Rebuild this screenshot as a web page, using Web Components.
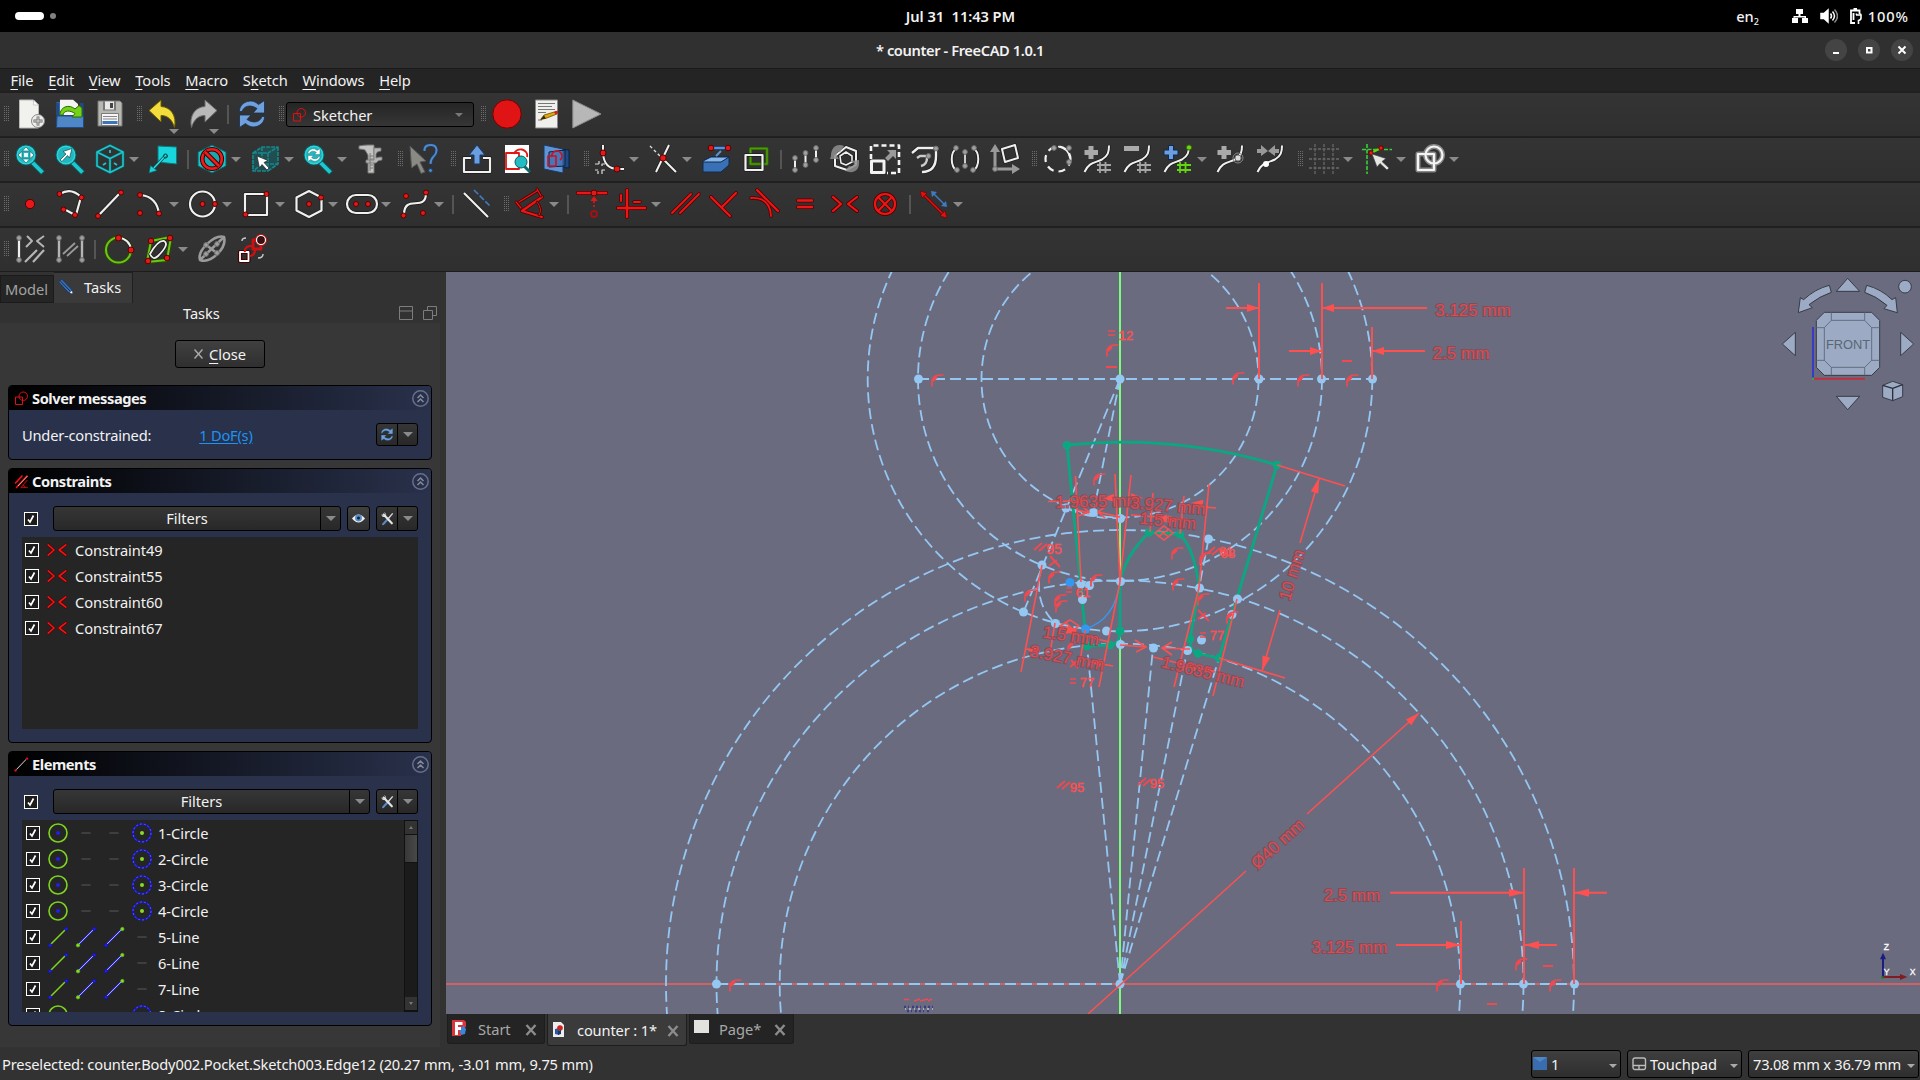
<!DOCTYPE html>
<html lang="en">
<head>
<meta charset="utf-8">
<title>counter - FreeCAD 1.0.1</title>
<style>
html,body{margin:0;height:100%;background:#323232;overflow:hidden}
body{font:14.667px/20px "Noto Sans",sans-serif;letter-spacing:-.06px;color:#f2f2f2;width:1920px;height:1080px}
</style>
</head>
<body>
<fc-app></fc-app>
<script>
const dot = (x, y, c = '#e01a1a', s = '#5a0000', r = 2.5) => `<circle cx="${x}" cy="${y}" r="${r}" fill="${c}" stroke="${s}" stroke-width="1"/>`;
const gd = (x, y) => dot(x, y, '#a0a0a0', '#6a6a6a', 2.4);
const W = (d, w = 2.2, x = '') => `<path d="${d}" fill="none" stroke="#1c1c1c" stroke-width="${w + 1.4}" ${x}/><path d="${d}" fill="none" stroke="#f0f0ee" stroke-width="${w}" ${x}/>`;
const L = (d, c, w = 2, x = '') => `<path d="${d}" fill="none" stroke="${c}" stroke-width="${w}" ${x}/>`;
const RD = (d, w = 1.8) => L(d, '#500000', w + 1.6, 'stroke-linecap="round"') + L(d, '#ef1515', w, 'stroke-linecap="round"');
const lens = `<path d="M17 18L28 29" stroke="#0a5c60" stroke-width="5.400"/><path d="M17 18L27.500 28.500" stroke="#1fc8cf" stroke-width="3.800"/><circle cx="11" cy="11" r="9.800" fill="#25b6bd" stroke="#0b5f63" stroke-width="1.400"/><circle cx="11" cy="11" r="8.800" fill="none" stroke="#2bd6dd" stroke-width="1.400"/>`;
const sync = (a, b) => `<g fill="${a}" stroke="${b}" stroke-width=".8"><path d="M2.500 12.500C2 4 14 -2 21.500 5.500L27.500 1.500V14H16L20 9.500C13 5 7 7 5 12.500Z"/><path d="M27.500 17.500C28 26 16 32 8.500 24.500L2.500 28.500V16H14L10 20.500C17 25 23 23 25 17.500Z"/></g>`;
const hash = c => L('M17 18V29M22.500 18V29M14 21H28M14 26H28', c, 1.8);
const spl = W('M1.500 28C6 18 12 19 19 15.500C25 12 26 8 26 1.500', 2);
const ICONS = {
  newdoc: `<g transform="translate(1.500 0)"><path d="M3 1H17L22 6V29H3Z" fill="#f1f1ee" stroke="#b9b9b4"/><path d="M17 1L22 6H17Z" fill="#fff" stroke="#b0b0b0" stroke-width=".6"/><circle cx="21.500" cy="22" r="6.500" fill="#eee" stroke="#888"/><path d="M21.500 17.500V26.500M17 22H26" stroke="#666" stroke-width="2.800"/><path d="M21.500 18V26M17.500 22H25.500" stroke="#ddd" stroke-width="1"/></g>`,
  open: `<path d="M1.500 3H6V16H1.500Z" fill="#3465a4"/><path d="M5 .8H18L23 5V18H5Z" fill="#f4f4f2"/><path d="M1.500 4V28H28.500V4H25V16H4V4Z" fill="#204a87"/><path d="M2 17H28.500V28.500H1.500Z" fill="#4f86c6" stroke="#204a87"/><path d="M4.500 16C6 7 14 5 20 10L24 6.500 27 9V18H17L20 14.500C15 11 9 11 8 16Z" fill="#73d216" stroke="#2e6b04" stroke-width="1"/>`,
  save: `<path d="M3 2H25L27 4V27H3Z" fill="#b8b8b2" stroke="#777" /><rect x="8" y="2.500" width="13" height="9" fill="#777"/><rect x="10" y="2.500" width="9" height="8" fill="#e8e8e8"/><rect x="15" y="4" width="3" height="5" fill="#444"/><rect x="6.500" y="14.500" width="17" height="12" fill="#f6f6f6" stroke="#666" stroke-width=".8"/><path d="M8 17.500H22M8 20H22" stroke="#888"/><rect x="7.500" y="22" width="15" height="3" fill="#3d74b8"/>`,
  undo: `<path d="M1 11.500L13 1V7.500C23 8 29 17 26.500 28.500C24 20 19 16.500 13 16.500V23Z" fill="#f2dd3c" stroke="#6d5c00"/>`,
  redo: `<path d="M29 11.500L17 1V7.500C7 8 1 17 3.500 28.500C6 20 11 16.500 17 16.500V23Z" fill="#b9b9b9" stroke="#6b6b6b"/>`,
  refresh: sync('#6fa0dc', '#15304f'),
  record: `<circle cx="15" cy="15" r="14.200" fill="#e01414" stroke="#7a0000"/>`,
  note: `<rect x="3.500" y="1" width="22" height="28" fill="#efefeb" stroke="#888"/><path d="M6 4.500H23M6 7.500H20M6 10.500H23M6 13.500H14M6 21H10" stroke="#777" stroke-width="1"/><path d="M9 20L12 16 24 12.500 25 15 13.500 19.500Z" fill="#e0a80c" stroke="#6b4a00" stroke-width=".8"/><path d="M8 21L12 16.500 14 19.500Z" fill="#3a2800"/><path d="M22 13L25.500 11.500 26.500 14 23.500 15.500Z" fill="#c22"/>`,
  play: `<path d="M.8 1L29 15 .8 29Z" fill="#b7b7b7" stroke="#8a8a8a"/>`,
  fitall: lens + `<path d="M11 3L14.500 7H7.500ZM11 19L7.500 15H14.500ZM3 11L7 7.500V14.500ZM19 11L15 14.500V7.500Z" fill="#fff" stroke="#0a5c60" stroke-width=".6"/><rect x="9" y="9" width="4" height="4" fill="#e9ffff"/>`,
  fitsel: lens + `<path d="M5 16L11 10 8 7.500 17 4.500 14.500 14 12.500 11.500 7 17.500Z" fill="#fff" stroke="#0a4c50" stroke-width=".7"/>`,
  cube: L('M15 1.500L28 8V22L15 28.500 2 22V8ZM2 8L15 14.500 28 8M15 14.500V28', '#0a5c60', 3) + L('M15 1.500L28 8V22L15 28.500 2 22V8ZM2 8L15 14.500 28 8M15 14.500V28', '#20c4ca', 1.6) + L('M8 21L11 19M19 19L22 21M15 6V9', '#20c4ca', 1.8),
  plane: `<path d="M10 2L28.500 3V20L10 18Z" fill="#19d6dd" stroke="#087b80"/>` + L('M18 11L4 26', '#064f52', 3) + L('M18 11L4 26', '#2fe0e6', 1.4) + `<path d="M1 29L2.500 21.500 9 26.500Z" fill="#20d0d6" stroke="#066" stroke-width=".7"/><circle cx="17.500" cy="12" r="2" fill="none" stroke="#044" />`,
  style: `<path d="M15 1L29 8V22L15 29 1 22V8Z" fill="#19c4ca" stroke="#0a5c60"/><circle cx="15" cy="15" r="9.800" fill="#168086" fill-opacity=".4" stroke="#3a0000" stroke-width="4.600"/><circle cx="15" cy="15" r="9.800" fill="none" stroke="#ee1c1c" stroke-width="2.600"/><path d="M8 8L22 22" stroke="#3a0000" stroke-width="4.600"/><path d="M8 8L22 22" stroke="#ee1c1c" stroke-width="2.600"/>`,
  boxsel: `<path d="M2 9L12 3H28V20L18 27H2Z" fill="#106a6e" fill-opacity=".5"/>` + L('M3 9H18V27H3ZM3 9L12 3H28L18 9M28 3V20L18 27M12 3V20H28M12 20L3 27', '#17878b', 1.6, 'stroke-dasharray="4 1"') + `<path d="M7 12L18 16.500 14 18.500 19 24 17 26 12 20.500 9.500 24Z" fill="#fff" stroke="#222" stroke-width=".7"/>`,
  syncview: lens + `<g transform="translate(3.800 3.800) scale(.48)">${sync('#fff', '#0b5f63')}</g>`,
  caliper: `<path d="M3 2Q8 1 12 1H18V29H12V11L9 6Q6 5 3 5Z" fill="#c3c3c1" stroke="#777"/><path d="M18 4Q22 4 25 4V7Q21 7 20 10V14Q22 13 26 13V16Q22 16 20 19H10V16H18Z" fill="#b4b4b2" stroke="#777" stroke-width=".8"/><path d="M14 9V27M17 12H14M17 15H14M17 21H14M17 24H14" stroke="#777" stroke-width="1"/>`,
  whats: `<path d="M1 2L17 17 11 18 16 28 12 29.500 8 20 2.500 24Z" fill="#8a8a84" stroke="#555"/>` + L('M15.500 7C15 1 20 1 22 1C27 1 28.500 5 27 9C25.500 13 21.500 13 21.500 20', '#1b3d68', 3.600) + L('M15.500 7C15 1 20 1 22 1C27 1 28.500 5 27 9C25.500 13 21.500 13 21.500 20', '#5488c8', 2) + `<circle cx="21.500" cy="26.500" r="2" fill="#5488c8" stroke="#1b3d68"/>`,
  leave: W('M9 14H2V28H28V14H21', 2.2) + `<path d="M15 1L23 11H18V20H12V11H7Z" fill="#6a9ee0" stroke="#173a66"/>`,
  viewsk: `<rect x="3" y="1" width="24" height="28" fill="#fff"/>` + L('M4 9H17V25H4ZM12 10A6.500 6 0 1 1 25 13', '#e01818', 1.8) + `<path d="M22 22L28 28" stroke="#0b6a6e" stroke-width="3"/><circle cx="19" cy="18" r="6" fill="#23bcc3" stroke="#0b5f63"/>`,
  section: `<path d="M14 5L27 6V24L14 23Z" fill="#204a87" stroke="#0b2240"/><path d="M2 1L21 5V29L2 25Z" fill="#5f95d6" stroke="#173a66"/><path d="M7 8L23 6V22L7 23Z" fill="#3566a5" fill-opacity=".6" stroke="#0b2240"/>` + L('M6 12H14V22H6ZM10 13A5 5 0 1 1 18 16', '#d01020', 1.6),
  fillet: W('M8 1V9M8 9Q9 25 23 25H29', 2) + L('M4 20V17M4 20H0M10 26H7V30M7 22V20H10M3 26H0M3 27V30', '#ddd', 1.2) + dot(8, 9, '#e01a1a', '#5a0000', 3) + dot(22, 25, '#e01a1a', '#5a0000', 3),
  trim: W('M21 1L8 28M15 15L28 28', 2) + L('M2 2L12 12', '#ddd', 1.4, 'stroke-dasharray="3 2.500"') + dot(15, 14, '#e01a1a', '#5a0000', 3.2),
  external: `<path d="M2 17L10 13H28V21L20 28H2Z" fill="#3a70b5" stroke="#0f2a4c"/><path d="M2 17L10 13H28L20 18H2Z" fill="#86b5ec" stroke="#0f2a4c"/>` + L('M11 4H26', '#204a87', 3.6) + L('M11 4H26M15 12L20 7', '#5b92d6', 2) + dot(10, 4, '#e01a1a', '#5a0000', 2.8) + dot(27, 4, '#e01a1a', '#5a0000', 2.8),
  carbon: L('M9.500 4.500H26V20H9.500Z', '#2d6b02', 3) + L('M9.500 4.500H26V20H9.500Z', '#4e9a06', 1.6) + W('M4.500 11H21.500V26H4.500Z', 2.2),
  pts: L('M5 15V26M15.500 9V21M26 3V16', '#eee', 2) + gd(5, 14) + gd(5, 26) + gd(15.500, 9) + gd(15.500, 21) + gd(26, 4) + gd(26, 16),
  rotate: W('M5 12L16 3 26 7V21L17 26 5 22Z', 2) + W('M10 12L16 8 22 12V18L16 21 11 19Z', 1.6) + `<path d="M1 12C1 4 6 -1 14 2L10 8C7 7 6 10 7 12L9 15H0ZM29 19C29 27 23 30 15 27L19 22C23 23 24 21 24 19L20 17 29 16Z" fill="#8f8f8f" fill-opacity=".85"/>`,
  scale: L('M1 15V1.500H29V29H17', '#f4f4f4', 2.6, 'stroke-dasharray="5 3"') + L('M1.500 17H14V28.500H1.500Z', '#f4f4f4', 3) + `<path d="M15 14L20 9 17 6H26V15L23 12 18 17Z" fill="#999"/>`,
  offset: W('M2 9L8 4H26V12C26 22 22 28 12 28', 2.4) + L('M7 14L10 12H17V14C17 19 15 21 11 22', '#ccc', 2.400) + gd(26, 4.500) + gd(18.500, 12),
  symm: W('M7 4C0 8 0 22 7 27M23 4C30 8 30 22 23 27', 2) + L('M15 8V24', '#ccc', 2) + gd(6, 4) + gd(7, 26) + gd(15, 8) + gd(15, 22) + gd(24, 4) + gd(23, 26),
  axes: L('M5 25V6M5 25H24', '#999', 3) + `<path d="M5 0L10 8H0ZM30 25L22 20V30Z" fill="#999"/>` + W('M12 5L25 1 28 14 15 18Z', 2) + gd(5, 25),
  bconv: `<circle cx="15" cy="15" r="12.500" fill="none" stroke="#f2f2f2" stroke-width="2.200" stroke-dasharray="7 5"/>` + gd(11, 4) + gd(26, 4) + gd(26, 18) + L('M15 2.500Q25 4 27 14', '#f2f2f2', 1.6),
  binc: spl + hash('#a5a5a5') + L('M8 2V15M1.500 8.500H15', '#aaa', 5),
  bdec: spl + hash('#a5a5a5') + L('M1 4.500H16', '#aaa', 5),
  bknot: spl + hash('#62d60e') + L('M8 1V16M.500 8.500H15.500', '#0f2a4c', 6) + L('M8 2V15M1.500 8.500H14.500', '#6a9ee0', 4) + dot(26, 3.500, '#73d216', '#2b6a02', 2.6),
  bins: spl + L('M8 2V15M1.500 8.500H15', '#aaa', 5) + `<circle cx="22" cy="14" r="5" fill="none" stroke="#888"/><circle cx="22" cy="14" r="3" fill="#ddd" stroke="#777"/>`,
  bjoin: spl + `<path d="M1 5H5V1L12 7 5 12V9H1ZM23 5H19V1L12 7 19 12V9H23Z" fill="#999"/><circle cx="10" cy="20" r="3" fill="#fff"/>`,
  grid: L('M6 0V30M15 0V30M24 0V30M0 5H30M0 15H30M0 24H30', '#696969', 1.300, 'stroke-dasharray="3 1.500"'),
  snap: L('M5 0V30M0 5.500H30', '#38d038', 1.6, 'stroke-dasharray="4 1.500"') + L('M9 9L19 4', '#62d60e', 2) + dot(9, 9, '#f01818', '#5a0000', 2.2) + dot(19, 4, '#f01818', '#5a0000', 2.2) + `<path d="M10 10L24 14.500 20 17.500 27 24 25 26 18 19.500 15 23Z" fill="#e6e6e2" stroke="#444" stroke-width=".7"/>`,
  render: L('M3 10H19V26H3Z', '#888', 5) + `<circle cx="19" cy="11" r="8.500" fill="none" stroke="#888" stroke-width="5"/><circle cx="19" cy="11" r="8.500" fill="none" stroke="#f4f4f4" stroke-width="2.200"/>` + L('M3 10H19V26H3Z', '#f4f4f4', 2.2),
  point: dot(15, 15, '#e81818', '#5a0000', 4.600),
  poly: W('M5 5Q16 -2 26 8L21 26M20 26L9 20', 2.2) + dot(4.500, 5) + dot(26.500, 8.500) + dot(8.500, 20.500) + dot(20, 26),
  line: W('M3 27L25 4', 2.2) + dot(3, 27) + dot(26, 3.500),
  eline: W('M3 27L25 4', 1.6) + dot(3, 27) + dot(26, 3.500),
  arc: W('M6 6Q22 8 24 25', 2.2) + dot(5, 6) + dot(24, 24.500) + dot(5, 24),
  circle: `<circle cx="14.500" cy="15" r="12.500" fill="none" stroke="#1c1c1c" stroke-width="3.600"/><circle cx="14.500" cy="15" r="12.500" fill="none" stroke="#f0f0ee" stroke-width="2.200"/>` + dot(14.500, 15) + dot(27, 15),
  rect: W('M4 5H26V26H4Z', 2.2) + dot(25.500, 5) + dot(4.500, 25.500),
  hex: W('M15 2L27.500 8.500V21.500L15 28 2.500 21.500V8.500Z', 2.200) + dot(15, 15) + dot(27, 8.500),
  slot: W('M9 6H21A9 9 0 0 1 21 24H9A9 9 0 0 1 9 6Z', 2.2) + dot(9, 15) + dot(21, 15),
  bspline: W('M4 26C4 4 26 24 26 4', 2.2) + dot(26, 3.500) + dot(3.500, 26.500) + dot(6, 7) + dot(23, 24),
  constr: W('M2 4L26 28', 2.2) + L('M12 1L29 18', '#3f7bc4', 1.6, 'stroke-dasharray="6 2"'),
  dim: RD('M27 8L7 22L27 28', 2.2) + RD('M22 13Q28 20 24 26', 1) + RD('M4 13L22 2M1 13L6 19M22 0L26 7', 1.2),
  coin: RD('M1 4H29', 2.6) + dot(17, 4, '#e01a1a', '#5a0000', 3) + L('M17 12V20', '#e01818', 1.6, 'stroke-dasharray="2 2"') + `<path d="M17 7L20.500 12H13.500Z" fill="#e01818"/><circle cx="17" cy="25" r="3" fill="none" stroke="#a51015" stroke-width="1.800"/>`,
  hv: RD('M10 1V28M1 19H28', 2.400) + RD('M4 6V12M17 13H23', 2),
  par: RD('M2 24L21 5M10 24L29 5', 1.800),
  perp: RD('M1 8L20 27M12 18L26 4', 2.2),
  tang: RD('M7 1L28 22', 2.2) + RD('M1 9Q20 8 21 27', 1.8),
  equal: RD('M8 11.500H22M8 18H22', 2.4),
  sym: RD('M3 8L11 15 3 22M27 8L18 15 27 22', 2.2),
  block: `<circle cx="15" cy="15" r="10" fill="none" stroke="#500000" stroke-width="3.800"/>` + RD('M8 8L22 22M22 8L8 22', 2) + `<circle cx="15" cy="15" r="10" fill="none" stroke="#ef1515" stroke-width="2.200"/>`,
  toggle: L('M3 4L26 27', '#600', 3) + L('M3 4L26 27', '#e41010', 1.6) + `<path d="M1 2L8 4 3 9ZM28 29L21 27 26 22Z" fill="#e41010" stroke="#600" stroke-width=".6"/>` + L('M14 4L26 16', '#3f7bc4', 1.5) + `<path d="M12 2L18 3 13 8ZM28 18L22 17 27 12Z" fill="#3f7bc4"/>`,
  selc: W('M4 6V24', 2.4) + gd(4, 4) + gd(4, 26) + L('M12 2L17 7 11 13M29 2L22 7 29 13', '#b5b5b5', 2) + L('M10 28L22 16M18 28L29 16', '#b5b5b5', 2.2),
  sele: L('M4 5V25M27 5V25', '#b5b5b5', 2.4) + gd(4, 4) + gd(4, 26) + gd(27, 4) + gd(27, 26) + L('M8 20L20 9M12 22L23 12', '#999', 1.800),
  ell: `<circle cx="14.500" cy="16" r="12.500" fill="none" stroke="#274d00" stroke-width="4"/><circle cx="14.500" cy="16" r="12.500" fill="none" stroke="#6fc41c" stroke-width="2"/>` + W('M14 3.500Q26 5 27 16', 2) + dot(14.500, 4, '#e01a1a', '#5a0000', 3) + dot(27, 16, '#e01a1a', '#5a0000', 3),
  bpoly: L('M7 7L27 3 23 26 3 28Z', '#274d00', 4) + L('M7 7L27 3 23 26 3 28Z', '#6fc41c', 2) + W('M6 20Q14 6 20 7Q26 10 14 22Q9 27 6 20Z', 1.8) + dot(7, 7, '#e01a1a', '#5a0000', 2.8) + dot(26, 4, '#e01a1a', '#5a0000', 2.8) + dot(4, 27, '#e01a1a', '#5a0000', 2.8) + dot(23, 24, '#e01a1a', '#5a0000', 2.8),
  ellax: L('M3 26C0 16 18 0 27 3C30 14 14 30 3 26ZM27 3L3 26M8 10L21 20', '#9b9b9b', 2.600) + gd(20, 10) + gd(9, 20) + gd(9, 11) + gd(20, 19),
  virt: L('M3 18H11.500V27H3Z', '#400', 4.200) + L('M3 18H11.500V27H3Z', '#fff', 1.8) + L('M8 18A5 5 0 1 1 13 22', '#d01010', 2.2) + L('M19 6H16V15H24V11', '#d01010', 2.800) + `<circle cx="24" cy="6" r="4.600" fill="#3a1010" stroke="#fff" stroke-width="1.400"/><circle cx="24" cy="6" r="5.600" fill="none" stroke="#d01010"/>` + L('M5 7Q5 4 9 4M26 20Q26 24 21 24', '#ccc', 1.400),
  sketcher: L('M3 12H17V27H3Z', '#e01010', 2) + `<circle cx="18.500" cy="10.500" r="8.500" fill="none" stroke="#e01010" stroke-width="2"/>`,
  cons: RD('M3 18L16 4M5 27L26 4', 2.6) + L('M8 24L27 4', '#ddd', 1.4) + RD('M27 27H14L26 13M18 22Q22 24 22 27', 1),
  pencil: `<path d="M-1 4L6 -2 27 20 29 29 20 27Z" fill="#3a6db2" stroke="#122b4d" stroke-width="1.500"/><path d="M23 28L29 29 28 23Z" fill="#fff"/><path d="M2 1L24 24" stroke="#122b4d" stroke-width="2"/>`,
  eye: `<path d="M0 15Q15 -3 30 15Q15 33 0 15Z" fill="#eee"/><circle cx="15" cy="14" r="8" fill="#5a8cc8"/><circle cx="15" cy="14" r="3.500" fill="#0c2340"/>`,
  tools: `<path d="M5 28L17 15" stroke="#5a8cc8" stroke-width="5" stroke-linecap="round"/><path d="M17 15L27 3" stroke="#ddd" stroke-width="3"/><path d="M6 6L25 26" stroke="#e4e4e4" stroke-width="5" stroke-linecap="round"/><path d="M1 5L6 10 11 5 7 1C12 1 13 7 11 11C7 13 1 11 1 5Z" fill="#e4e4e4"/>`,
  ec: `<circle cx="15" cy="15" r="13.500" fill="none" stroke="#7ed321" stroke-width="2.400"/><circle cx="15" cy="15" r="3" fill="#2020e8"/>`,
  ecb: `<circle cx="15" cy="15" r="13.500" fill="none" stroke="#1414c8" stroke-width="2.800"/><circle cx="15" cy="15" r="13.500" fill="none" stroke="#7070ff" stroke-width="1.200" stroke-dasharray="3 3"/><circle cx="15" cy="15" r="3" fill="#84e020"/>`,
  none: `<path d="M8 15H22" stroke="#565656" stroke-width="1.600"/>`,
  l1: L('M3 27L27 3', '#7ed321', 2.4) + dot(3, 27.500, '#2020e8', '#10109a', 2.6) + dot(27.500, 3, '#2020e8', '#10109a', 2.6),
  l2: L('M3 27L27 3', '#2a2ae0', 2.8) + L('M3 27L27 3', '#d0d0d8', 1.2) + dot(3, 27.500, '#84e020', '#5fae15', 2.6) + dot(27.500, 3, '#2020e8', '#10109a', 2.6),
  l3: L('M3 27L27 3', '#2a2ae0', 2.8) + L('M3 27L27 3', '#d0d0d8', 1.2) + dot(3, 27.500, '#2020e8', '#10109a', 2.6) + dot(27.500, 3, '#84e020', '#5fae15', 2.6)
};

function define(name, css, html) {
  customElements.define(name, class extends HTMLElement {
    connectedCallback() {
      if (this.shadowRoot) return;
      const root = this.attachShadow({ mode: 'open' });
      root.innerHTML = `<style>*{box-sizing:border-box}${css}</style>` + (typeof html === 'function' ? html(this) : html);
    }
  });
}

define('fc-icon', ':host{display:block;flex:none;width:30px;height:30px}svg{display:block;width:100%;height:100%;overflow:visible}',
  el => `<svg viewBox="0 0 30 30" stroke-linejoin="round">${ICONS[el.getAttribute('name')]}</svg>`);

define('fc-tool', `:host{display:flex;align-items:center;width:40px;height:42px;padding-left:5px;flex:none}
  :host([menu]){width:53px} i{width:0;height:0;border:5px solid transparent;border-top-color:#8a8a8a;border-bottom:0;margin-left:4px}
  :host([drop]){position:relative} :host([drop]) i{position:absolute;left:26px;top:36px;margin:0}`,
  el => `<fc-icon name="${el.getAttribute('icon')}"></fc-icon>${el.hasAttribute('menu') || el.hasAttribute('drop') ? '<i></i>' : ''}`);

define('fc-grip', `:host{display:flex;justify-content:flex-end;align-items:center;width:13px;height:42px;padding-right:1px;flex:none}
  :host([first]){width:10px}:host([wide]){width:14px;padding-right:2px} b{width:5px;height:16px;background:repeating-linear-gradient(90deg,transparent 0 1px,#323232 1px 2px),repeating-linear-gradient(#6b6b6b 0 1px,#323232 1px 2px)}`, '<b></b>');

define('fc-sep', ':host{display:flex;align-items:center;justify-content:center;width:9px;height:42px;flex:none}b{width:2px;height:19px;background:#555}', '<b></b>');

define('fc-toolbar', ':host{display:flex;height:45px;border-top:2px solid #202020;background:linear-gradient(#343434,#2f2f2f);align-items:flex-start}', '<slot></slot>');

define('fc-combo', `:host{display:flex;align-items:center;width:188px;height:25px;margin-top:9px;border:1px solid #000;border-radius:3px;background:linear-gradient(#252525,#363636);padding:0 10px 0 5px}
  fc-icon{width:15px;height:18px;margin-right:6px} i{margin-left:auto;border:4px solid transparent;border-top-color:#777;border-bottom:0}`,
  '<fc-icon name="sketcher"></fc-icon><slot></slot><i></i>');

define('fc-topbar', `:host{display:grid;grid-template-columns:1fr auto 1fr;align-items:center;height:32px;background:#000;font-weight:600;font-size:14.667px}
  .l{display:flex;align-items:center;gap:6px;padding-left:15px}.l b{width:29px;height:8px;border-radius:4px;background:#fff}.l i{width:6px;height:6px;border-radius:3px;background:#808080}
  .r{display:flex;justify-content:flex-end;align-items:center;padding-right:12px} .r span{font-weight:500} sub{font-size:9px;line-height:0;vertical-align:-3px} svg{display:block}`,
  `<div class="l"><b></b><i></i></div><div style="white-space:pre;padding-left:1px">Jul 31  11:43 PM</div>
  <div class="r"><span style="margin-right:32px">en<sub>2</sub></span>
  <svg width="18" height="18" viewBox="0 0 18 18" style="margin-right:11px" fill="#fff"><path d="M5 2h7v5h-2.500v2H15v2h2v5h-6v-5h2.500v-.5h-10V11H7v5H1v-5h1.500V9H7.500V7H5z"/></svg>
  <svg width="18" height="18" viewBox="0 0 18 18" style="margin-right:11px" fill="none" stroke="#fff" stroke-width="1.500"><path d="M1 6.500h3L8 3v12L4 11.500H1z" fill="#fff" /><path d="M10.500 6.500q2 2.500 0 5M12.500 4.500q4 4.500 0 9"/><path d="M14.500 2.500q6 6.500 0 13" stroke="#888"/></svg>
  <svg width="15" height="18" viewBox="0 0 15 18" fill="none" stroke="#fff" stroke-width="1.800"><path d="M6 16H2V3.500h8.500V7M4.500 2h3.500"/><path d="M7 8h5v3q0 2-2.500 2.500V17M7.500 6.500V8M11.500 6.500V8" stroke-width="1.600"/><path d="M4.500 6v7" /></svg>
  <span style="margin-left:4px;letter-spacing:.9px;margin-right:-1px">100%</span></div>`);

define('fc-titlebar', `:host{display:grid;grid-template-columns:1fr auto 1fr;align-items:center;height:36px;background:#303030;font-weight:600;padding-bottom:1px;letter-spacing:-.4px;box-sizing:border-box}
  .w{display:flex;justify-content:flex-end;gap:11px;padding-right:7px}.w b{width:22px;height:22px;border-radius:11px;background:#444;display:grid;place-items:center}svg{width:12px;height:12px;fill:none;stroke:#fff;stroke-width:2}`,
  `<span></span><span>* counter - FreeCAD 1.0.1</span><div class="w"><b><svg><path d="M3 9H9"/></svg></b><b><svg><rect x="4" y="4" width="4.500" height="4.500"/></svg></b><b><svg><path d="M2.500 2.500L9.500 9.500M9.500 2.500L2.500 9.500"/></svg></b></div>`);

define('fc-menubar', `:host{display:flex;box-sizing:border-box;height:23px;align-items:center;background:#242424;border-top:1px solid #1a1a1a;padding:0 0 0 3px;letter-spacing:-.1px}
  span{padding:0 7.400px}u{text-underline-offset:3px;text-decoration-thickness:1px}`,
  '<span><u>F</u>ile</span><span><u>E</u>dit</span><span><u>V</u>iew</span><span><u>T</u>ools</span><span><u>M</u>acro</span><span>S<u>k</u>etch</span><span><u>W</u>indows</span><span><u>H</u>elp</span>');

define('fc-check', ':host{display:block;width:14px;height:14px;flex:none}svg{display:block}',
  '<svg width="14" height="14" fill="none" stroke="#fff"><rect x=".5" y=".5" width="13" height="13" fill="#1c1c1c"/><path d="M4 7.500L6 10 9.500 3.500" stroke-width="1.700"/></svg>');

define('fc-split', `:host{display:flex;height:25px;border:1px solid #000;border-radius:3px;background:linear-gradient(#363636,#282828);align-items:stretch}
  div{flex:1;display:flex;align-items:center;justify-content:center;padding-bottom:1px}b{width:20px;border-left:1px solid #000;display:grid;place-items:center}i{border:5px solid transparent;border-top-color:#8a8a8a;border-bottom:0}`,
  '<div><slot></slot></div><b><i></i></b>');
define('fc-push', ':host{display:flex;align-items:center;justify-content:center;border:1px solid #000;border-radius:3px;background:linear-gradient(#404040,#2f2f2f)}', '<slot></slot>');

define('fc-group', `:host{display:flex;flex-direction:column;border:1px solid #000;border-radius:4px;background:#29314b;overflow:hidden;flex:none}
  header{height:24px;display:flex;align-items:center;padding:0 2px 0 5px;background:linear-gradient(90deg,#000,#29314b);font-weight:700;letter-spacing:-.45px}
  header fc-icon{width:15px;height:15px;margin-right:3px}svg{margin-left:auto}`,
  el => `<header><fc-icon name="${el.getAttribute('icon')}"></fc-icon>${el.getAttribute('label')}<svg width="17" height="17" fill="none" stroke="#66708a" stroke-width="1.500"><circle cx="8.500" cy="8.500" r="7.700"/><path d="M5.500 8L8.500 5 11.500 8M5.500 12L8.500 9 11.500 12" stroke="#858b9c"/></svg></header><slot></slot>`);

define('fc-crow', ':host{display:flex;align-items:center;height:26px;padding-left:3px}fc-icon{width:22px;height:22px;margin:0 7px 0 7px}',
  '<fc-check></fc-check><fc-icon name="sym"></fc-icon><slot></slot>');
define('fc-erow', ':host{display:flex;align-items:center;height:26px;padding-left:4px;flex:none}.i{display:flex;gap:8px;margin:0 6px 0 8px}fc-icon{width:20px;height:20px}',
  el => `<fc-check></fc-check><div class="i">${(el.hasAttribute('line') ? ['l1', 'l2', 'l3', 'none'] : ['ec', 'none', 'none', 'ecb']).map(n => `<fc-icon name="${n}"></fc-icon>`).join('')}</div><slot></slot>`);

define('fc-tasks', `:host{display:flex;flex-direction:column;width:440px;height:775px;background:#373737}
  .tabs{display:flex;align-items:flex-end;height:31px;background:#323232}
  .t1{width:54px;height:28px;background:#252525;border:1px solid #1b1b1b;color:#a2a2a2;padding:3px 0 0 4px}
  .t2{width:79px;height:31px;background:#3a3a3a;border:1px solid #1f1f1f;border-bottom:0;border-left:0;display:flex;align-items:center;gap:11px;padding:0 0 3px 5px;letter-spacing:.05px}
  .t2 fc-icon{width:14px;height:14px}
  .title{display:flex;align-items:center;height:20px;background:#323232;padding:0 3px 0 183px}.title svg{margin-left:auto}
  .body{display:flex;flex-direction:column;padding:17px 8px 0;}
  fc-push.c{width:90px;height:28px;align-self:center;margin:0 0 17px;gap:6px}
  u{text-underline-offset:3px;text-decoration-thickness:1px}
  .solver{display:flex;align-items:center;height:49px;padding:0 13px;letter-spacing:-.22px}.link{color:#1a94f5;text-decoration:underline;text-underline-offset:2px;margin-left:48px}
  .solver fc-split{width:42px;height:23px;margin-left:auto}.solver fc-icon{width:14px;height:15px}
  .f{display:flex;align-items:center;padding:13px 13px 6px 15px}
  .f fc-check{margin-right:15px}.f .m{flex:1}.f fc-push{width:23px;height:25px;margin-left:6px}.f .s{width:42px;margin-left:6px}
  .f fc-icon{width:13px;height:13px}
  .list{height:192px;margin:0 13px 13px;background:#252525;overflow:hidden}
  .e{display:flex}.e .rows{flex:1;display:flex;flex-direction:column;overflow:hidden;height:192px}
  .sb{width:14px;height:192px;background:#1b1b1b;border:1px solid #111;display:flex;flex-direction:column}.sb b{height:14px;background:#333;display:grid;place-items:center;border-bottom:1px solid #111}.sb .th{height:28px;background:linear-gradient(90deg,#383838,#484848)}.sb i{border:2.500px solid transparent;border-bottom:3px solid #777;border-top:0}.sb .dn{margin-top:auto}.sb .dn i{border-bottom:0;border-top:3px solid #777}`,
  `<div class="tabs"><div class="t1">Model</div><div class="t2"><fc-icon name="pencil"></fc-icon>Tasks</div></div>
  <div class="title">Tasks<svg width="38" height="14" fill="none" stroke="#7d7d7d"><path d="M.5.5H13.500V13.500H.5ZM.5 5H13.500M24.500 4.500H33.500V13.500H24.500ZM28.500 4.500V.5H37.500V9.500H33.500"/></svg></div>
  <div class="body"><fc-push class="c"><svg width="9" height="10" stroke="#aaa" stroke-width="1.500"><path d="M.5.5L8.500 9.500M8.500.5L.5 9.500"/></svg><span><u>C</u>lose</span></fc-push>
  <fc-group icon="sketcher" label="Solver messages"><div class="solver"><span>Under-constrained:</span><span class="link">1 DoF(s)</span><fc-split><fc-icon name="refresh"></fc-icon></fc-split></div></fc-group>
  <fc-group icon="cons" label="Constraints" style="margin-top:8px"><div class="f"><fc-check></fc-check><fc-split class="m">Filters</fc-split><fc-push><fc-icon name="eye"></fc-icon></fc-push><fc-split class="s"><fc-icon name="tools"></fc-icon></fc-split></div>
  <div class="list"><fc-crow>Constraint49</fc-crow><fc-crow>Constraint55</fc-crow><fc-crow>Constraint60</fc-crow><fc-crow>Constraint67</fc-crow></div></fc-group>
  <fc-group icon="eline" label="Elements" style="margin-top:8px"><div class="f"><fc-check></fc-check><fc-split class="m">Filters</fc-split><fc-split class="s"><fc-icon name="tools"></fc-icon></fc-split></div>
  <div class="list e"><div class="rows"><fc-erow>1-Circle</fc-erow><fc-erow>2-Circle</fc-erow><fc-erow>3-Circle</fc-erow><fc-erow>4-Circle</fc-erow><fc-erow line>5-Line</fc-erow><fc-erow line>6-Line</fc-erow><fc-erow line>7-Line</fc-erow><fc-erow>8-Circle</fc-erow></div><div class="sb"><b><i></i></b><b class="th"></b><b class="dn"><i></i></b></div></div></fc-group></div>`);

/* Sketch geometry, in window pixels */
const line = (x1, y1, x2, y2) => `M${x1} ${y1}L${x2} ${y2}`;
const P = [[918.5,379],[1120,379],[1259,379],[1321.5,379],[1372.5,379],[716.5,984],[1120,984],[1460.500,984],[1523.500,984],[1574.500,984],[1066,508],[1093.5,512.500],[1120.500,518.500],[1208.500,539],[1042,565],[1081,584],[1089.500,585.500],[1120.500,581.500],[1082.500,599.500],[1199.500,588],[1237.500,599],[1232,614.500],[1023.500,612],[1055.500,623.500],[1106.500,631],[1120.500,644.500],[1153.500,648],[1187.500,650.500],[1201.500,640]];
const G = [[1067,445.300],[1277,465],[1149,532.500],[1180,534.500],[1120,631],[1087,646],[1110,645],[1190,639],[1198,653.500],[1219,658]];
const arrow = (x, y, a, s = 12) => `<path d="M0 0L${-s} -4V4Z" fill="#ff5050" transform="translate(${x} ${y}) rotate(${a})"/>`;
const label = (t, x, y, a = 0, s = 17) => `<text transform="translate(${x} ${y}) rotate(${a})" font-size="${s}" text-anchor="middle" dominant-baseline="central">${t}</text>`;
const hook = (x, y) => `<path d="M${x + 1} ${y + 12.500}V${y + 8}Q${x + 1.500} ${y + 1} ${x + 9} ${y + 1}H${x + 12.500}"/><path d="M${x + 1.500} ${y + 6.500}L${x + 5.500} ${y + 2.500}" stroke-width="3.400"/>`;
const hooks = [[931,374],[1106,344],[1232,372],[1297,374],[1346,374],[1093,473],[1048,571],[1024,589],[1054,594],[1055,600],[1090,574],[1171,547],[1172,578],[1199,552],[1197,593],[1226,611],[1067,641],[1436,979],[1515,958],[1549,979],[729,979]];
define('fc-view', ':host{display:block;width:1474px;height:742px;background:#6b6b80}svg{display:block}text{font-family:"Liberation Sans",sans-serif;letter-spacing:0}.lb text{fill:#d84e55;stroke:#85454f;stroke-width:2px;paint-order:stroke;stroke-opacity:.75}.sm text{fill:#ff5050;stroke:#ff5050;stroke-width:.4px}',
  `<svg width="1474" height="742" viewBox="446 272 1474 742">
  <path d="M1120 272V1014" stroke="#7dfb7d" stroke-width="2"/><path d="M446 984H1920" stroke="#d06265" stroke-width="2"/>
  <g fill="none" stroke="#94c8f2" stroke-width="1.800" stroke-dasharray="11 5">
   ${[138.500, 202, 252.300].map(r => `<circle cx="1120" cy="379" r="${r}"/>`).join('')}
   ${[340.300, 403.500, 454].map(r => `<circle cx="1120" cy="984" r="${r}"/>`).join('')}
   <path d="M918 379H1372M717 984H1120M1460 984H1574"/>
   <path d="${line(1120,379,1023.5,612)}${line(1120,379,1093.5,512)}${line(1120,984,1087,646)}${line(1120,984,1153,648)}${line(1120,984,1187,651)}${line(1120,984,1219,658)}M1066 508Q1090 519 1120 518M1042 565Q1032 602 1055 623M1208.500 539L1199 588"/>
  </g>
  <path d="M1085 629Q1115 620 1120 582" fill="none" stroke="#3399f0" stroke-width="1.500"/>
  <path d="M1067 445A542 542 0 0 1 1277 465L1219 658L1198 653.500Q1189 651 1190 639L1199 588Q1195 550 1180 534.500Q1165 532.500 1149 532.500Q1125 556 1120 582V631Q1120 645 1110 645L1087 646L1085 629L1067 445" fill="none" stroke="#0aa882" stroke-width="2.800"/>
  ${G.map(p => `<circle cx="${p[0]}" cy="${p[1]}" r="4.200" fill="#0aa882"/>`).join('')}
  ${P.map(p => `<circle cx="${p[0]}" cy="${p[1]}" r="4.500" fill="#94c8f2"/>`).join('')}
  <circle cx="1070" cy="582.500" r="4.500" fill="#3399f0"/><circle cx="1085.500" cy="629" r="4.500" fill="#3399f0"/><circle cx="1120" cy="631" r="4.300" fill="#0aa882"/>
  <g fill="none" stroke="#ff5050" stroke-width="1.900">
   <path d="M1259 283V379M1322 283V379M1372 327V379M1226 308H1259M1427 308H1322M1289 351H1322M1425 351H1372
    M1524 868V984M1574 868V984M1461 921V984M1390 892.700H1524M1607 892.700H1574M1396 945H1461M1557 945H1524"/>
   <path stroke-width="1.500" d="M1088 1014L1246 871M1307 814L1419 713"/>
   <path stroke-width="1.600" d="${line(1075.500,476,1081,582)}${line(1115,474,1120,582)}${line(1131,475,1120,582)}${line(1120,582,1099,687)}${line(1153,493,1150,532)}${line(1184,496,1180,534)}${line(1209,484,1199,588)}${line(1199,588,1174,687)}${line(1237,599,1213,696)}${line(1042,565,1021,672)}${line(1055,623,1050,653)}${line(1085,630,1080,662)}${line(1277,465,1345,486)}${line(1219,658,1285,678)}${line(1319,479,1300,543)}${line(1280,610,1262,671)}
    M1048 501.500L1080 501M1131 515L1187 519M1193 506L1216 508M1066 631L1109 642M1026 649L1040 651M1090 662L1113 666M1153 657L1215 672M1120 645L1146 647M1135 640L1146 647L1136 652M1190 649L1162 648M1172 642L1162 648L1172 655M1077 510L1089 513M1120 517L1098 512M1106 506L1098 512L1105 518M1079 504L1089 512L1078 516"/>
   <path stroke-width="1.500" d="M1155 533L1164 526 1173 533 1164 540ZM1159 530L1169 537M1169 529L1158 537M1060 626L1070 620 1079 626 1070 632ZM1065 622L1075 631"/>
  </g>
  ${arrow(1259,308,0)}${arrow(1322,308,180)}${arrow(1322,351,0)}${arrow(1372,351,180)}${arrow(1524,892.700,0,15)}${arrow(1574,892.700,180,15)}${arrow(1461,945,0,15)}${arrow(1524,945,180,15)}${arrow(1419,713,-42,14)}${arrow(1319,478,-73,15)}${arrow(1262,671,107,15)}
  ${arrow(1088,500,0)}${arrow(1102,498,180)}${arrow(1143,498,4)}${arrow(1191,503,184)}${arrow(1155,518,184)}${arrow(1180,520,4)}${arrow(1064,630,190)}${arrow(1026,649,190)}${arrow(1089,661,190)}${arrow(1078,630,0)}${arrow(1184,665,194)}${arrow(1216,672,14)}
  <g stroke="#f0494f" stroke-width="1.700" fill="none">${hooks.map(h => hook(...h)).join('')}
   <path d="M1106 367H1117M1342 361H1352M1543 966H1553M1487 1004H1497M1050 556L1060 567M1049 566L1057 560M1198 610L1209 621M1198 619L1206 613M1071 660L1078 668M1070 667L1077 661" stroke-width="2"/>
   <path d="M1034 550L1042 543M1039 551L1047 544M1207 554L1215 547M1212 555L1220 548M1057 788L1065 781M1062 789L1070 782M1138 785L1146 778M1143 786L1151 779" stroke-width="1.800"/>
   <path d="M1108 331H1115M1108 335H1115M1066 588H1072M1066 592H1072M1200 633H1206M1200 637H1206M1070 679H1076M1070 683H1076"/>
  </g>
  <g class="lb">
   ${label('3.125 mm',1473,310)}${label('2.5 mm',1461,353)}${label('2.5 mm',1352,895)}${label('3.125 mm',1349.500,947.500)}
   ${label('Ø40 mm',1278,844,-42)}${label('10 mm',1292,575,-73)}
   ${label('1.9635 mm',1098,501.500,-1)}${label('3.927 mm',1168,506,5)}${label('1.5 mm',1168,521,6)}
   ${label('1.5 mm',1071,636,8)}${label('3.927 mm',1067,658,11)}${label('1.9635 mm',1203,672,14)}
  </g>
  <g class="sm">${label('12',1126,335.500,0,13)}${label('95',1054,549,0,14)}${label('61',1083,592,0,13)}${label('77',1217,635,0,13)}${label('77',1087,682,0,13)}${label('98',1228,553,0,13)}${label('61',1226,551,0,13)}${label('95',1077,787,0,13)}${label('95',1157,783,0,13)}</g>
  <g><path d="M904 999.500h5M914 1001l6 -2M920 1001l8 -2M928 1001l4 -2" stroke="#f0494f" stroke-width="1.500"/><path d="M904 1007H934M907 1011H931" stroke="#3c3c86" stroke-width="2.500" stroke-dasharray="2 2 1 3 2 2"/><path d="M905 1009H933" stroke="#a8b0b8" stroke-width="2" stroke-dasharray="1 3 2 3"/></g>
  <g transform="translate(1700 260) scale(.33333)" fill="#9cabc3" stroke="#2a2f3a" stroke-width="2.600" stroke-linejoin="round">
   <path d="M443 55L479 94H409ZM443 449L409 409H479ZM247 252L286 217V287ZM641 252L602 217V287Z"/>
   <path d="M388 76L394 97Q360 108 327 134L337 143L295 158L301 113L311 119Q345 87 388 76ZM500 76L494 97Q528 108 561 136L552 146L592 158L587 113L576 119Q543 87 500 76Z"/>
   <circle cx="615" cy="80" r="19"/>
   <path d="M373 157H515L539 181V322L515 346H373L349 322V181Z"/><path fill="none" stroke="#5a6575" d="M394 181H494L515 203V301L494 322H394L373 301V203ZM394 157V181M494 157V181M394 322V346M494 322V346M349 203H373M349 301H373M515 203H539M515 301H539"/>
   <path fill="none" stroke="#5a6575" d="M394 181L373 203M361 169L384 192M527 169L505 192M361 334L384 311M527 334L505 311" stroke-opacity="0"/>
   <path d="M548 376L578 364 608 374V410L578 422 548 412Z"/><path fill="none" stroke-width="4" d="M548 376L578 385 608 374M578 385V422"/>
   <path d="M339 201V354" stroke="#3a3ac4" stroke-width="6"/><path d="M342 356H495" stroke="#c0303c" stroke-width="6"/><rect x="336" y="353" width="6" height="6" fill="#30b040" stroke="none"/>
   <text x="444" y="266" text-anchor="middle" font-size="38.500" fill="#596674" stroke="none">FRONT</text>
  </g>
  <g transform="translate(1500 920) scale(.33333)"><path d="M1149 172V112" stroke="#1c1c80" stroke-width="6"/><path d="M1149 98L1158 118H1140Z" fill="#1c1c80"/><path d="M1149 171H1204" stroke="#801c20" stroke-width="6"/><path d="M1222 171L1200 162V180Z" fill="#801c20"/><rect x="1144" y="169" width="7" height="7" fill="#1c801c"/>
   <g font-size="26" fill="#fff" stroke="#fff" stroke-width=".8"><text x="1151" y="90">Z</text><text x="1151" y="166">Y</text><text x="1229" y="166">X</text></g></g>
  </svg>`);

define('fc-doctabs', `:host{display:flex;align-items:flex-start;gap:2px;height:33px;padding-left:1px}
  div{display:flex;align-items:center;height:30px;background:#242424;color:#a8a8a8;border:1px solid #1d1d1d;border-top:0;border-radius:0 0 3px 3px;padding:0 7px 0 4px}
  .a{height:32px;background:#3b3b3b;color:#f2f2f2;letter-spacing:-.15px}svg{flex:none}.x{margin-left:auto;margin-top:3px}`,
  () => { const x = '<svg class="x" width="12" height="12" stroke="#8c8c8c" stroke-width="2.400"><path d="M1.500 1L10.500 11M10.500 1L1.500 11"/></svg>';
  return `<div style="width:98px"><svg width="14" height="17" style="margin-right:12px;margin-top:-3px"><path d="M0 1H12L14 3V8L9 9V17H0Z" fill="#d8353c"/><path d="M7 9l5-2 2 3-1 5-4 1z" fill="#3d86d6"/><path d="M3 3H10.500V6H6V8H9V11H6V16H3Z" fill="#fff"/></svg>Start${x}</div>
  <div class="a" style="width:140px"><svg width="11" height="15" style="margin-right:13px;margin-left:1px"><path d="M0 0H8L11 3V15H0Z" fill="#eee"/><path d="M2 7L6 6V13L2 12Z" fill="#2a5a9c"/><circle cx="7" cy="6" r="2.800" fill="#c22"/><path d="M5 9L8 8V12L5 13Z" fill="#173a66"/></svg>counter : 1*${x}</div>
  <div style="width:105px"><svg width="15" height="13" style="margin:-4px 10px 0 0"><rect width="15" height="13" fill="#e2e2de"/></svg>Page*${x}</div>`; });

define('fc-status', `:host{display:flex;align-items:center;height:33px;padding:0 1px 0 2px;box-sizing:border-box}
  span{margin-right:auto;letter-spacing:-.17px;margin-top:1px}div{display:flex;align-items:center;height:28px;border:1.500px solid #000;border-radius:3px;background:linear-gradient(#3f3f3f,#2e2e2e);margin-left:6px;padding:0 3px 0 4px;white-space:nowrap}
  i{margin-left:auto;border:4px solid transparent;border-top-color:#aaa;border-bottom:0;margin-top:5px}`,
  `<span>Preselected: counter.Body002.Pocket.Sketch003.Edge12 (20.27 mm, -3.01 mm, 9.75 mm)</span>
  <div style="width:90px;padding-left:1px"><svg width="14" height="13" style="margin-right:4px"><rect width="14" height="13" fill="#3a6db0"/><path d="M0 0L7 5 14 0" fill="#4f86c6"/></svg>1<i></i></div>
  <div style="width:115px"><svg width="15" height="14" fill="none" stroke="#bbb" stroke-width="1.400" style="margin-right:3px"><rect x="1" y="1" width="12.500" height="11.500" rx="2"/><path d="M1 8.500H13.500M7 8.500V12"/></svg>Touchpad<i></i></div>
  <div style="width:171px;letter-spacing:-.25px">73.08 mm x 36.79 mm<i></i></div>`);

const bar = s => s.trim().split(/\s+/).map((t, i, a) => t === '|' ? '<fc-sep></fc-sep>' : t === ':' ? `<fc-grip${i ? '' : ' first'}${a[i + 1] === '@' ? ' wide' : ''}></fc-grip>` : t === '@' ? '<fc-combo>Sketcher</fc-combo>' : `<fc-tool icon="${t.replace(/[+^]/, '')}"${t.endsWith('+') ? ' menu' : t.endsWith('^') ? ' drop' : ''}></fc-tool>`).join('');
define('fc-app', `:host{display:flex;flex-direction:column;width:1920px;height:1080px;background:#323232}
  .mid{display:flex;height:776px;box-sizing:border-box;border-top:1px solid #1c1c1c}.right{display:flex;flex-direction:column;margin-left:6px}
  fc-toolbar{box-sizing:border-box}`,
  `<fc-topbar></fc-topbar><fc-titlebar></fc-titlebar><fc-menubar></fc-menubar>
  <fc-toolbar>${bar(': newdoc open save : undo^ redo^ | refresh : @ : record note play')}</fc-toolbar>
  <fc-toolbar>${bar(': fitall fitsel cube+ plane | style+ boxsel+ syncview+ caliper : whats : leave viewsk section : fillet+ trim+ external carbon | pts rotate scale offset symm axes : bconv binc bdec bknot+ bins bjoin : grid+ snap+ render+')}</fc-toolbar>
  <fc-toolbar>${bar(': point poly line arc+ circle+ rect+ hex+ slot+ bspline+ | constr : dim+ | coin hv+ par perp tang equal sym block | toggle+')}</fc-toolbar>
  <fc-toolbar>${bar(': selc sele | ell bpoly+ ellax virt')}</fc-toolbar>
  <div class="mid"><fc-tasks></fc-tasks><div class="right"><fc-view></fc-view><fc-doctabs></fc-doctabs></div></div>
  <fc-status></fc-status>`);
</script>
</body>
</html>
